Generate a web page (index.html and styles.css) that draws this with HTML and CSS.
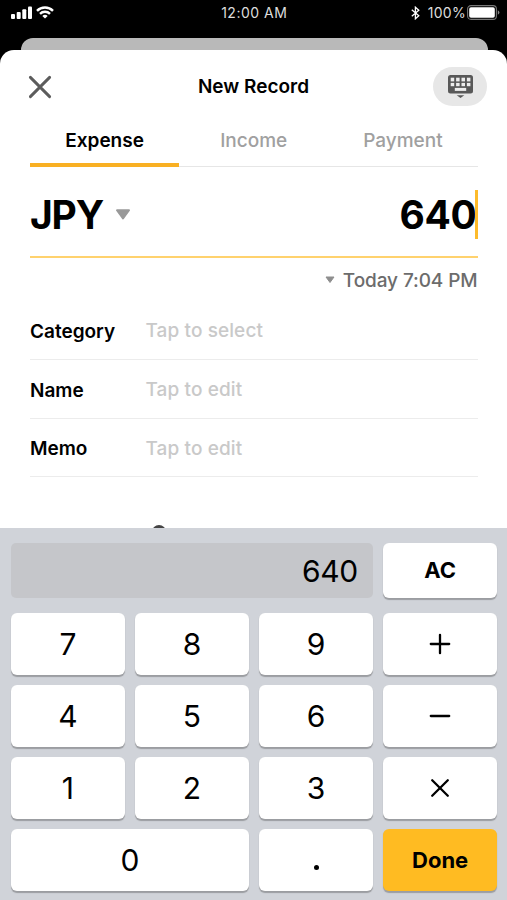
FILE: index.html
```html
<!DOCTYPE html>
<html lang="en">
<head>
    <meta charset="UTF-8">
    <meta name="viewport" content="width=device-width, initial-scale=1.0">
    <title>New Record</title>
    <link rel="stylesheet" href="styles.css">
</head>
<body>
    <div class="status">
        <div class="status-left">
            <svg width="21" height="13" viewBox="0 0 21 13" fill="#fff">
                <rect x="0" y="8" width="4" height="5" rx="1"/>
                <rect x="5.7" y="6" width="4" height="7" rx="1"/>
                <rect x="11.3" y="3.3" width="4" height="9.7" rx="1"/>
                <rect x="17" y="0.5" width="4" height="12.5" rx="1"/>
            </svg>
            <svg width="18" height="13" viewBox="0 0 18 13" fill="none" stroke="#fff" stroke-width="2.4">
                <path d="M1 4.8a11.3 11.3 0 0 1 16 0"/>
                <path d="M4 7.9a7 7 0 0 1 10 0"/>
                <path d="M9 12.6L6.3 10a3.9 3.9 0 0 1 5.4 0z" fill="#fff" stroke="none"/>
            </svg>
        </div>
        <div class="status-time">12:00 AM</div>
        <div class="status-right">
            <svg width="9" height="14" viewBox="0 0 9 14" fill="none" stroke="#fff" stroke-width="1.3">
                <path d="M0.8 3.8l7 6L4.4 12.8V1.2l3.4 3-7 6"/>
            </svg>
            <span class="percent">100%</span>
            <svg width="33" height="15" viewBox="0 0 33 15">
                <rect x="0.6" y="0.6" width="28.8" height="13.8" rx="3.4" fill="none" stroke="#777" stroke-width="1.1"/>
                <rect x="2.2" y="2.2" width="25.6" height="10.6" rx="1.8" fill="#fff"/>
                <path d="M30.8 5.2q1.6.8 1.6 2.3t-1.6 2.3z" fill="#888"/>
            </svg>
        </div>
    </div>

    <div class="back-sheet"></div>
    <div class="sheet">
        <div class="header">
            <button class="close" aria-label="Close">
                <svg width="24" height="24" viewBox="0 0 24 24" fill="none" stroke="#5c5c5c" stroke-width="2.9" stroke-linecap="round">
                    <path d="M2.4 2.4L21.6 21.6M21.6 2.4L2.4 21.6"/>
                </svg>
            </button>
            <h1>New Record</h1>
            <button class="keyboard-btn" aria-label="Hide keyboard">
                <svg width="25" height="24" viewBox="0 0 25 24">
                    <rect x="0" y="0" width="25" height="18.5" rx="2.5" fill="#585858"/>
                    <g fill="#ededed">
                        <rect x="2.7" y="2.7" width="3.5" height="3.7"/>
                        <rect x="8.1" y="2.7" width="3.5" height="3.7"/>
                        <rect x="13.5" y="2.7" width="3.5" height="3.7"/>
                        <rect x="18.9" y="2.7" width="3.5" height="3.7"/>
                        <rect x="2.7" y="7.9" width="3.5" height="3.3"/>
                        <rect x="8.1" y="7.9" width="3.5" height="3.3"/>
                        <rect x="13.5" y="7.9" width="3.5" height="3.3"/>
                        <rect x="18.9" y="7.9" width="3.5" height="3.3"/>
                        <rect x="6.8" y="12.9" width="11.4" height="3"/>
                    </g>
                    <path d="M8.7 20.2h7.6L12.5 23z" fill="#585858"/>
                </svg>
            </button>
        </div>

        <div class="tabs">
            <div class="tab active">Expense</div>
            <div class="tab">Income</div>
            <div class="tab">Payment</div>
        </div>

        <div class="amount">
            <span class="currency">JPY</span>
            <svg class="arrow" width="16" height="11" viewBox="0 0 16 11">
                <path d="M2 1.2h12L8 9.4z" fill="#999" stroke="#999" stroke-width="2" stroke-linejoin="round"/>
            </svg>
            <span class="value">640</span>
            <span class="cursor"></span>
        </div>

        <div class="date">
            <svg width="10" height="8" viewBox="0 0 10 8">
                <path d="M1 1h8L5 6.5z" fill="#8e8e8e" stroke="#8e8e8e" stroke-linejoin="round"/>
            </svg>
            <span class="date-text">Today 7:04 PM</span>
        </div>

        <div class="row"><span class="label">Category</span><span class="hint">Tap to select</span></div>
        <div class="row"><span class="label">Name</span><span class="hint">Tap to edit</span></div>
        <div class="row"><span class="label">Memo</span><span class="hint">Tap to edit</span></div>

        <div class="peek"><span class="knob"></span></div>
    </div>

    <div class="keypad">
        <div class="display">640</div>
        <button class="key bold">AC</button>
        <button class="key">7</button>
        <button class="key">8</button>
        <button class="key">9</button>
        <button class="key" aria-label="Plus">
            <svg width="22" height="22" viewBox="0 0 22 22"><path d="M11 1.8v18.4M1.8 11h18.4"/></svg>
        </button>
        <button class="key">4</button>
        <button class="key">5</button>
        <button class="key">6</button>
        <button class="key" aria-label="Minus">
            <svg width="22" height="22" viewBox="0 0 22 22"><path d="M1.8 11h18.4"/></svg>
        </button>
        <button class="key">1</button>
        <button class="key">2</button>
        <button class="key">3</button>
        <button class="key" aria-label="Multiply">
            <svg width="22" height="22" viewBox="0 0 22 22"><path d="M3.2 3.2l15.6 15.6M18.8 3.2L3.2 18.8"/></svg>
        </button>
        <button class="key zero">0</button>
        <button class="key" aria-label="Decimal point"><span class="dot"></span></button>
        <button class="key bold done">Done</button>
    </div>
</body>
</html>
```
FILE: styles.css
```css
* {
    box-sizing: border-box;
}
body {
    margin: 0;
    width: 507px;
    height: 900px;
    overflow: hidden;
    background: #000;
    color: #000;
    font-family: Inter, "Liberation Sans", sans-serif;
    display: flex;
    flex-direction: column;
}
button {
    border: none;
    padding: 0;
    background: none;
    color: #000;
    font-family: inherit;
}
svg {
    display: block;
}

/* status bar */
.status {
    height: 38px;
    flex: none;
    padding: 0 7px 13px 10.5px;
    display: grid;
    grid-template-columns: 1fr auto 1fr;
    align-items: center;
    color: #ddd;
    font-size: 14px;
}
.status-left {
    display: flex;
    gap: 4.5px;
}
.status-time {
    margin-right: 2px;
    letter-spacing: 0.5px;
}
.status-right {
    display: flex;
    justify-content: flex-end;
    align-items: center;
}
.percent {
    margin: 0 1px 0 8px;
    letter-spacing: 0.3px;
}

.back-sheet {
    height: 12px;
    flex: none;
    margin: 0 19px 0 21px;
    background: #b9b9b9;
    border-radius: 12px 12px 0 0;
}
.sheet {
    height: 477.5px;
    flex: none;
    padding: 0 29.5px 0 30px;
    background: #fff;
    border-radius: 14px 14px 0 0;
    overflow: hidden;
    display: flex;
    flex-direction: column;
}

.header {
    height: 64px;
    flex: none;
    margin: 4.5px -9.5px 0.5px -2px;
    display: grid;
    grid-template-columns: 54px 1fr 54px;
    align-items: center;
}
.header h1 {
    margin: 0 0 0 -8px;
    text-align: center;
    font-size: 19px;
    font-weight: 600;
}
.keyboard-btn {
    width: 54px;
    height: 39px;
    border-radius: 20px;
    background: #e7e7e7;
    display: flex;
    align-items: center;
    justify-content: center;
    padding-top: 1px;
}

.tabs {
    height: 48px;
    flex: none;
    display: grid;
    grid-template-columns: repeat(3, 1fr);
    border-bottom: 1px solid #e6e6e6;
    font-size: 19px;
    font-weight: 500;
    color: #a0a0a0;
    text-align: center;
    line-height: 43px;
}
.tab.active {
    color: #000;
    font-weight: 600;
    border-bottom: 4px solid #f9b023;
    height: 48px;
}

.amount {
    height: 91px;
    flex: none;
    display: flex;
    align-items: center;
    padding-top: 6px;
    border-bottom: 2px solid #ffd26e;
    font-size: 39px;
    font-weight: 700;
}
.currency {
    letter-spacing: -1.2px;
}
.arrow {
    margin-left: 12px;
}
.value {
    margin-left: auto;
    letter-spacing: -0.3px;
}
.cursor {
    width: 2.5px;
    height: 49px;
    margin-left: -1.5px;
    background: #fdbb2b;
}

.date {
    height: 43px;
    flex: none;
    display: flex;
    align-items: center;
    justify-content: flex-end;
    gap: 8px;
    padding-top: 1px;
    font-size: 19px;
    font-weight: 500;
    letter-spacing: -0.1px;
    color: #6c6c6c;
}

.row {
    height: 58.8px;
    flex: none;
    display: flex;
    align-items: center;
    padding-top: 3px;
    border-bottom: 1px solid #ececec;
    font-size: 19px;
}
.label {
    width: 115.5px;
    font-weight: 600;
}
.hint {
    margin-top: -1px;
    color: #c9c9c9;
    font-weight: 500;
    letter-spacing: 0.1px;
}

/* top of the row hidden behind the keypad */
.peek {
    margin-top: auto;
    height: 3px;
    padding-left: 122px;
    overflow: hidden;
}
.knob {
    display: block;
    width: 14px;
    height: 14px;
    border-radius: 50%;
    background: #444;
}

.keypad {
    flex: 1;
    padding: 15px 10px 9.5px 11px;
    background: #d0d3d9;
    display: grid;
    grid-template-columns: repeat(4, 1fr);
    grid-template-rows: 60px repeat(4, 61.5px);
    column-gap: 10.3px;
    row-gap: 10.6px;
}
.display {
    grid-column: span 3;
    height: 55px;
    padding-right: 15px;
    border-radius: 5px;
    background: #c5c6ca;
    text-align: right;
    font-size: 30px;
    line-height: 56px;
    letter-spacing: -0.3px;
}
.key {
    border-radius: 6px;
    background: #fff;
    box-shadow: 0 1.5px 1px #9b9da1;
    font-size: 30px;
    display: flex;
    align-items: center;
    justify-content: center;
}
.key svg {
    fill: none;
    stroke: #000;
    stroke-width: 2.3;
    stroke-linecap: round;
}
.bold {
    font-size: 22px;
    font-weight: 700;
}
.display + .key {
    margin-bottom: 4.5px;
}
.zero {
    grid-column: span 2;
}
.dot {
    width: 5px;
    height: 5px;
    margin-top: 15px;
    border-radius: 50%;
    background: #000;
}
.done {
    background: #ffbb22;
}
```
